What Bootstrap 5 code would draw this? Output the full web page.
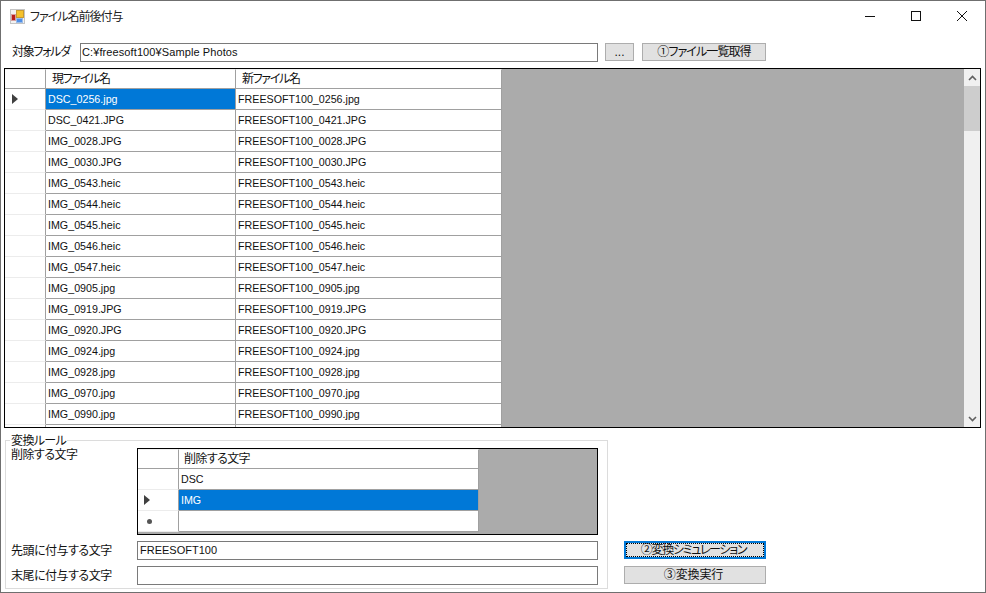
<!DOCTYPE html>
<html lang="ja">
<head>
<meta charset="utf-8">
<title>ファイル名前後付与</title>
<link href="https://cdn.jsdelivr.net/npm/bootstrap@5.3.0/dist/css/bootstrap.min.css" rel="stylesheet">
<style>
html,body{margin:0;height:100%;background:#fff;overflow:hidden}
body{font-family:"Liberation Sans","Noto Sans CJK JP",sans-serif;font-size:12px;line-height:14px;color:#111;font-feature-settings:"palt"}
.win{width:986px;height:593px;border:1px solid #6f6f6f;background:#fff;overflow:hidden}
.titlebar{height:31px;padding-left:9px}
.apptitle{margin-left:5px;font-size:12px;letter-spacing:-1px;color:#222;margin-top:1px}
.capbtns{margin-left:auto;align-self:flex-start}
.capbtn{width:46px;height:29px}
.toprow{height:18px;margin-top:11px;padding-left:11px}
.lab1{width:68px;letter-spacing:-1.3px}
.winput{border:1px solid #7a7a7a;background:#fff;height:19px;padding:0 1px;line-height:17px;white-space:nowrap;overflow:hidden;font-size:11px}
.winput.w1{width:518px;letter-spacing:.1px}
.wbtn{background:#e1e1e1;border:1px solid #adadad;height:18px;line-height:16px;text-align:center;color:#111}
.wbtn.dots{width:29px;margin-left:7px}
.wbtn.get{width:124px;margin-left:8px;letter-spacing:-.9px}
.wbtn.wide{width:142px;padding-right:3px;letter-spacing:-.1px}
.wbtn.focus{border:2px solid #0078d7;line-height:14px;height:18px;position:relative;letter-spacing:-1.3px}
.wbtn.focus::after{content:"";position:absolute;inset:0;border:1px dotted #000}
.grid1{margin:7px 0 0 3px;width:977px;height:360px;border:1px solid #000;background:#ababab;overflow:hidden}
.gridbody{flex:1;min-width:0;overflow:hidden}
.grow{display:flex;height:21px}
.grow>div{background:#fff;border-right:1px solid #a0a0a0;border-bottom:1px solid #a0a0a0;padding-left:2px;line-height:20px;white-space:nowrap;overflow:hidden;font-size:10.7px}
.grow.head{height:20px}
.grow.head>div{line-height:19px;padding-left:6px;font-size:12px;letter-spacing:-1.3px;border-top:1px solid #f0f0f0}
.grid2 .grow.head>div{letter-spacing:-.6px;padding-left:5px}
.grow>.rh{width:41px;padding:0;border-bottom-color:#ececec;display:flex;align-items:center;justify-content:flex-start}
.grow.head>.rh{border-bottom-color:#a0a0a0}
.c1{width:190px}
.c2{width:266px}
.c3{width:300px}
.grow>.sel{background:#0078d7;color:#fff}
.tri{width:0;height:0;border-left:6px solid #404040;border-top:5px solid transparent;border-bottom:5px solid transparent;margin-left:7px}
.grid2 .tri{margin-left:6px}
.star{width:5px;height:5px;border-radius:50%;background:#555;margin-left:9px}
.sbar{width:16px;background:#f0f0f0;flex:none;margin-left:auto}
.sarrow{height:17px}
.sthumb{height:45px;background:#cdcdcd}
.strack{flex:1}
.lower{margin:12px 0 0 4px}
.groupbox{width:603px;height:149px;border:1px solid #dcdcdc;position:relative;padding:7px 8px 0 5px}
.legendtxt{position:absolute;left:4px;top:-7px;background:#fff;padding:0 1px;line-height:14px;letter-spacing:-.6px}
.rulelab{width:126px;letter-spacing:-.5px}
.grid2{width:461px;height:87px;border:1px solid #000;background:#ababab;overflow:hidden}
.fieldrow{margin-top:6px}
.winput.w2{width:461px;padding-left:2px}
.side{margin-left:16px;padding-bottom:5px;gap:7px}
</style>
</head>
<body>
<div class="win d-flex flex-column">
  <div class="titlebar d-flex align-items-center">
    <svg width="15" height="15" viewBox="0 0 15 15" aria-hidden="true"><rect x=".5" y=".5" width="14" height="14" fill="#f2f2f2" stroke="#c4c4c4"/><rect x="1.5" y="5.5" width="4" height="6" fill="#b8201c" stroke="#d8a0a0"/><rect x="6.5" y="1.5" width="7" height="7" fill="#f5c22c" stroke="#c89a30"/><rect x="6.5" y="9.5" width="6" height="4" fill="#4f8fe6" stroke="#9dbde8"/></svg>
    <span class="apptitle">ファイル名前後付与</span>
    <div class="capbtns d-flex">
      <div class="capbtn d-flex align-items-center justify-content-center"><svg width="10" height="10" viewBox="0 0 10 10" aria-hidden="true"><path d="M0 5.5H10" stroke="#111" fill="none"/></svg></div>
      <div class="capbtn d-flex align-items-center justify-content-center"><svg width="10" height="10" viewBox="0 0 10 10" aria-hidden="true"><rect x=".5" y=".5" width="9" height="9" stroke="#111" fill="none"/></svg></div>
      <div class="capbtn d-flex align-items-center justify-content-center"><svg width="10" height="10" viewBox="0 0 10 10" aria-hidden="true"><path d="M0 0L10 10M10 0L0 10" stroke="#111" fill="none" stroke-width="1"/></svg></div>
    </div>
  </div>
  <div class="toprow d-flex align-items-center">
    <div class="lab1">対象フォルダ</div>
    <div class="winput w1">C:¥freesoft100¥Sample Photos</div>
    <div class="wbtn dots">...</div>
    <div class="wbtn get">①ファイル一覧取得</div>
  </div>
  <div class="grid1 d-flex">
    <div class="gridbody" id="g1">
      <div class="grow head"><div class="rh"></div><div class="c1">現ファイル名</div><div class="c2">新ファイル名</div></div>
      <div class="grow"><div class="rh"><span class="tri"></span></div><div class="c1 sel">DSC_0256.jpg</div><div class="c2">FREESOFT100_0256.jpg</div></div>
      <div class="grow"><div class="rh"></div><div class="c1">DSC_0421.JPG</div><div class="c2">FREESOFT100_0421.JPG</div></div>
      <div class="grow"><div class="rh"></div><div class="c1">IMG_0028.JPG</div><div class="c2">FREESOFT100_0028.JPG</div></div>
      <div class="grow"><div class="rh"></div><div class="c1">IMG_0030.JPG</div><div class="c2">FREESOFT100_0030.JPG</div></div>
      <div class="grow"><div class="rh"></div><div class="c1">IMG_0543.heic</div><div class="c2">FREESOFT100_0543.heic</div></div>
      <div class="grow"><div class="rh"></div><div class="c1">IMG_0544.heic</div><div class="c2">FREESOFT100_0544.heic</div></div>
      <div class="grow"><div class="rh"></div><div class="c1">IMG_0545.heic</div><div class="c2">FREESOFT100_0545.heic</div></div>
      <div class="grow"><div class="rh"></div><div class="c1">IMG_0546.heic</div><div class="c2">FREESOFT100_0546.heic</div></div>
      <div class="grow"><div class="rh"></div><div class="c1">IMG_0547.heic</div><div class="c2">FREESOFT100_0547.heic</div></div>
      <div class="grow"><div class="rh"></div><div class="c1">IMG_0905.jpg</div><div class="c2">FREESOFT100_0905.jpg</div></div>
      <div class="grow"><div class="rh"></div><div class="c1">IMG_0919.JPG</div><div class="c2">FREESOFT100_0919.JPG</div></div>
      <div class="grow"><div class="rh"></div><div class="c1">IMG_0920.JPG</div><div class="c2">FREESOFT100_0920.JPG</div></div>
      <div class="grow"><div class="rh"></div><div class="c1">IMG_0924.jpg</div><div class="c2">FREESOFT100_0924.jpg</div></div>
      <div class="grow"><div class="rh"></div><div class="c1">IMG_0928.jpg</div><div class="c2">FREESOFT100_0928.jpg</div></div>
      <div class="grow"><div class="rh"></div><div class="c1">IMG_0970.jpg</div><div class="c2">FREESOFT100_0970.jpg</div></div>
      <div class="grow"><div class="rh"></div><div class="c1">IMG_0990.jpg</div><div class="c2">FREESOFT100_0990.jpg</div></div>
      <div class="grow"><div class="rh"></div><div class="c1"></div><div class="c2"></div></div>
    </div>
    <div class="sbar d-flex flex-column">
      <div class="sarrow d-flex align-items-center justify-content-center"><svg width="9" height="6" viewBox="0 0 9 6" aria-hidden="true"><path d="M1 5L4.5 1.5L8 5" stroke="#606060" stroke-width="1.6" fill="none"/></svg></div>
      <div class="sthumb"></div>
      <div class="strack"></div>
      <div class="sarrow d-flex align-items-center justify-content-center"><svg width="9" height="6" viewBox="0 0 9 6" aria-hidden="true"><path d="M1 1L4.5 4.5L8 1" stroke="#606060" stroke-width="1.6" fill="none"/></svg></div>
    </div>
  </div>
  <div class="lower d-flex align-items-end">
    <div class="groupbox">
      <div class="legendtxt">変換ルール</div>
      <div class="d-flex">
        <div class="rulelab">削除する文字</div>
        <div class="grid2">
          <div class="grow head"><div class="rh"></div><div class="c3">削除する文字</div></div>
          <div class="grow"><div class="rh"></div><div class="c3">DSC</div></div>
          <div class="grow"><div class="rh"><span class="tri"></span></div><div class="c3 sel">IMG</div></div>
          <div class="grow"><div class="rh"><span class="star"></span></div><div class="c3"></div></div>
        </div>
      </div>
      <div class="d-flex align-items-center fieldrow">
        <div class="rulelab">先頭に付与する文字</div>
        <div class="winput w2">FREESOFT100</div>
      </div>
      <div class="d-flex align-items-center fieldrow">
        <div class="rulelab">末尾に付与する文字</div>
        <div class="winput w2"></div>
      </div>
    </div>
    <div class="side d-flex flex-column">
      <div class="wbtn wide focus">②変換シミュレーション</div>
      <div class="wbtn wide">③変換実行</div>
    </div>
  </div>
</div>
</body>
</html>
